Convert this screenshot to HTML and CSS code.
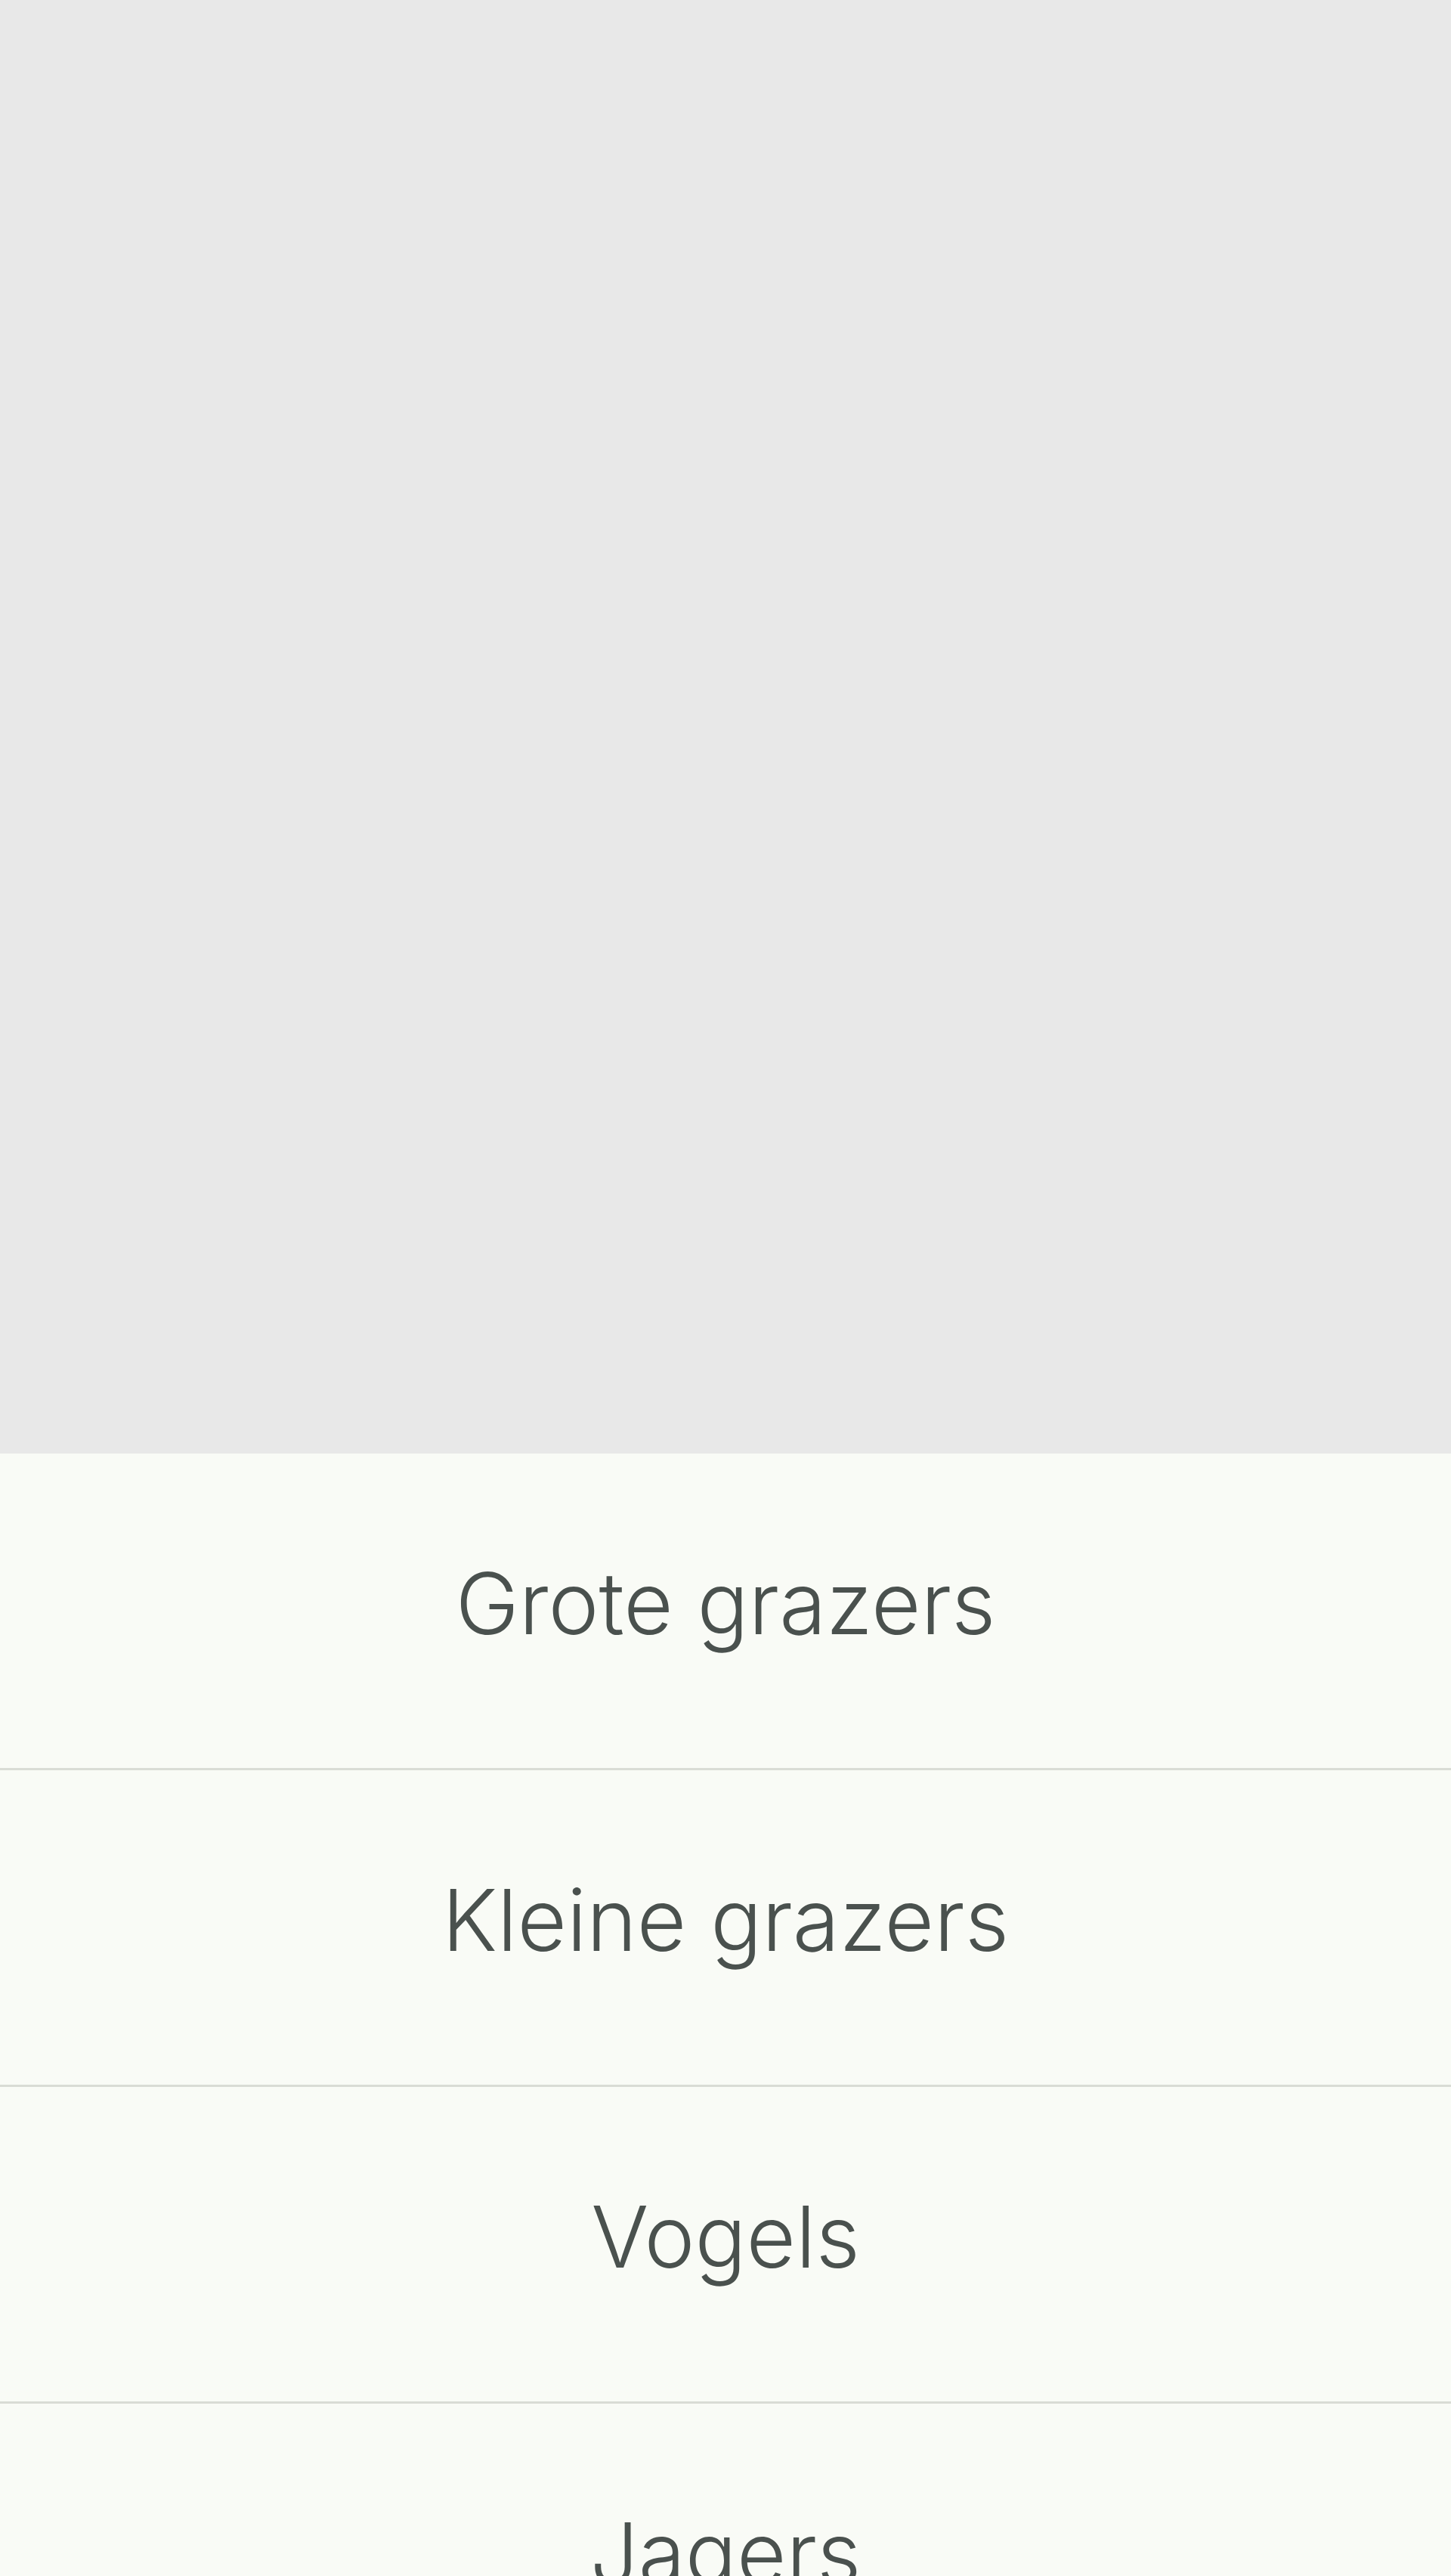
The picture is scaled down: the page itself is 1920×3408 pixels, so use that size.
FILE: index.html
```html
<!DOCTYPE html>
<html lang="nl">
<head>
<meta charset="utf-8">
<title>Dieren</title>
<link rel="stylesheet" href="styles.css">
</head>
<body>
<div class="page">
  <div class="hero"></div>
  <ul class="menu">
    <li class="menu-item">Grote grazers</li>
    <li class="menu-item">Kleine grazers</li>
    <li class="menu-item">Vogels</li>
    <li class="menu-item">Jagers</li>
  </ul>
</div>
</body>
</html>
```
FILE: styles.css
```css
html, body {
  margin: 0;
  padding: 0;
}
body {
  background: #f9fbf6;
  font-family: "Inter", "Lato", sans-serif;
  color: #4a514e;
}
.page {
  display: flex;
  flex-direction: column;
}
.hero {
  height: 1923px;
  background: #e8e8e8;
}
.menu {
  list-style: none;
  margin: 0;
  padding: 0;
}
.menu-item {
  height: 416px;
  border-bottom: 3px solid #d9dcd5;
  display: flex;
  align-items: center;
  justify-content: center;
  font-size: 113px;
  font-weight: 300;
  line-height: 1;
  padding-bottom: 20px;
  box-sizing: border-box;
  height: 419px;
}
```
